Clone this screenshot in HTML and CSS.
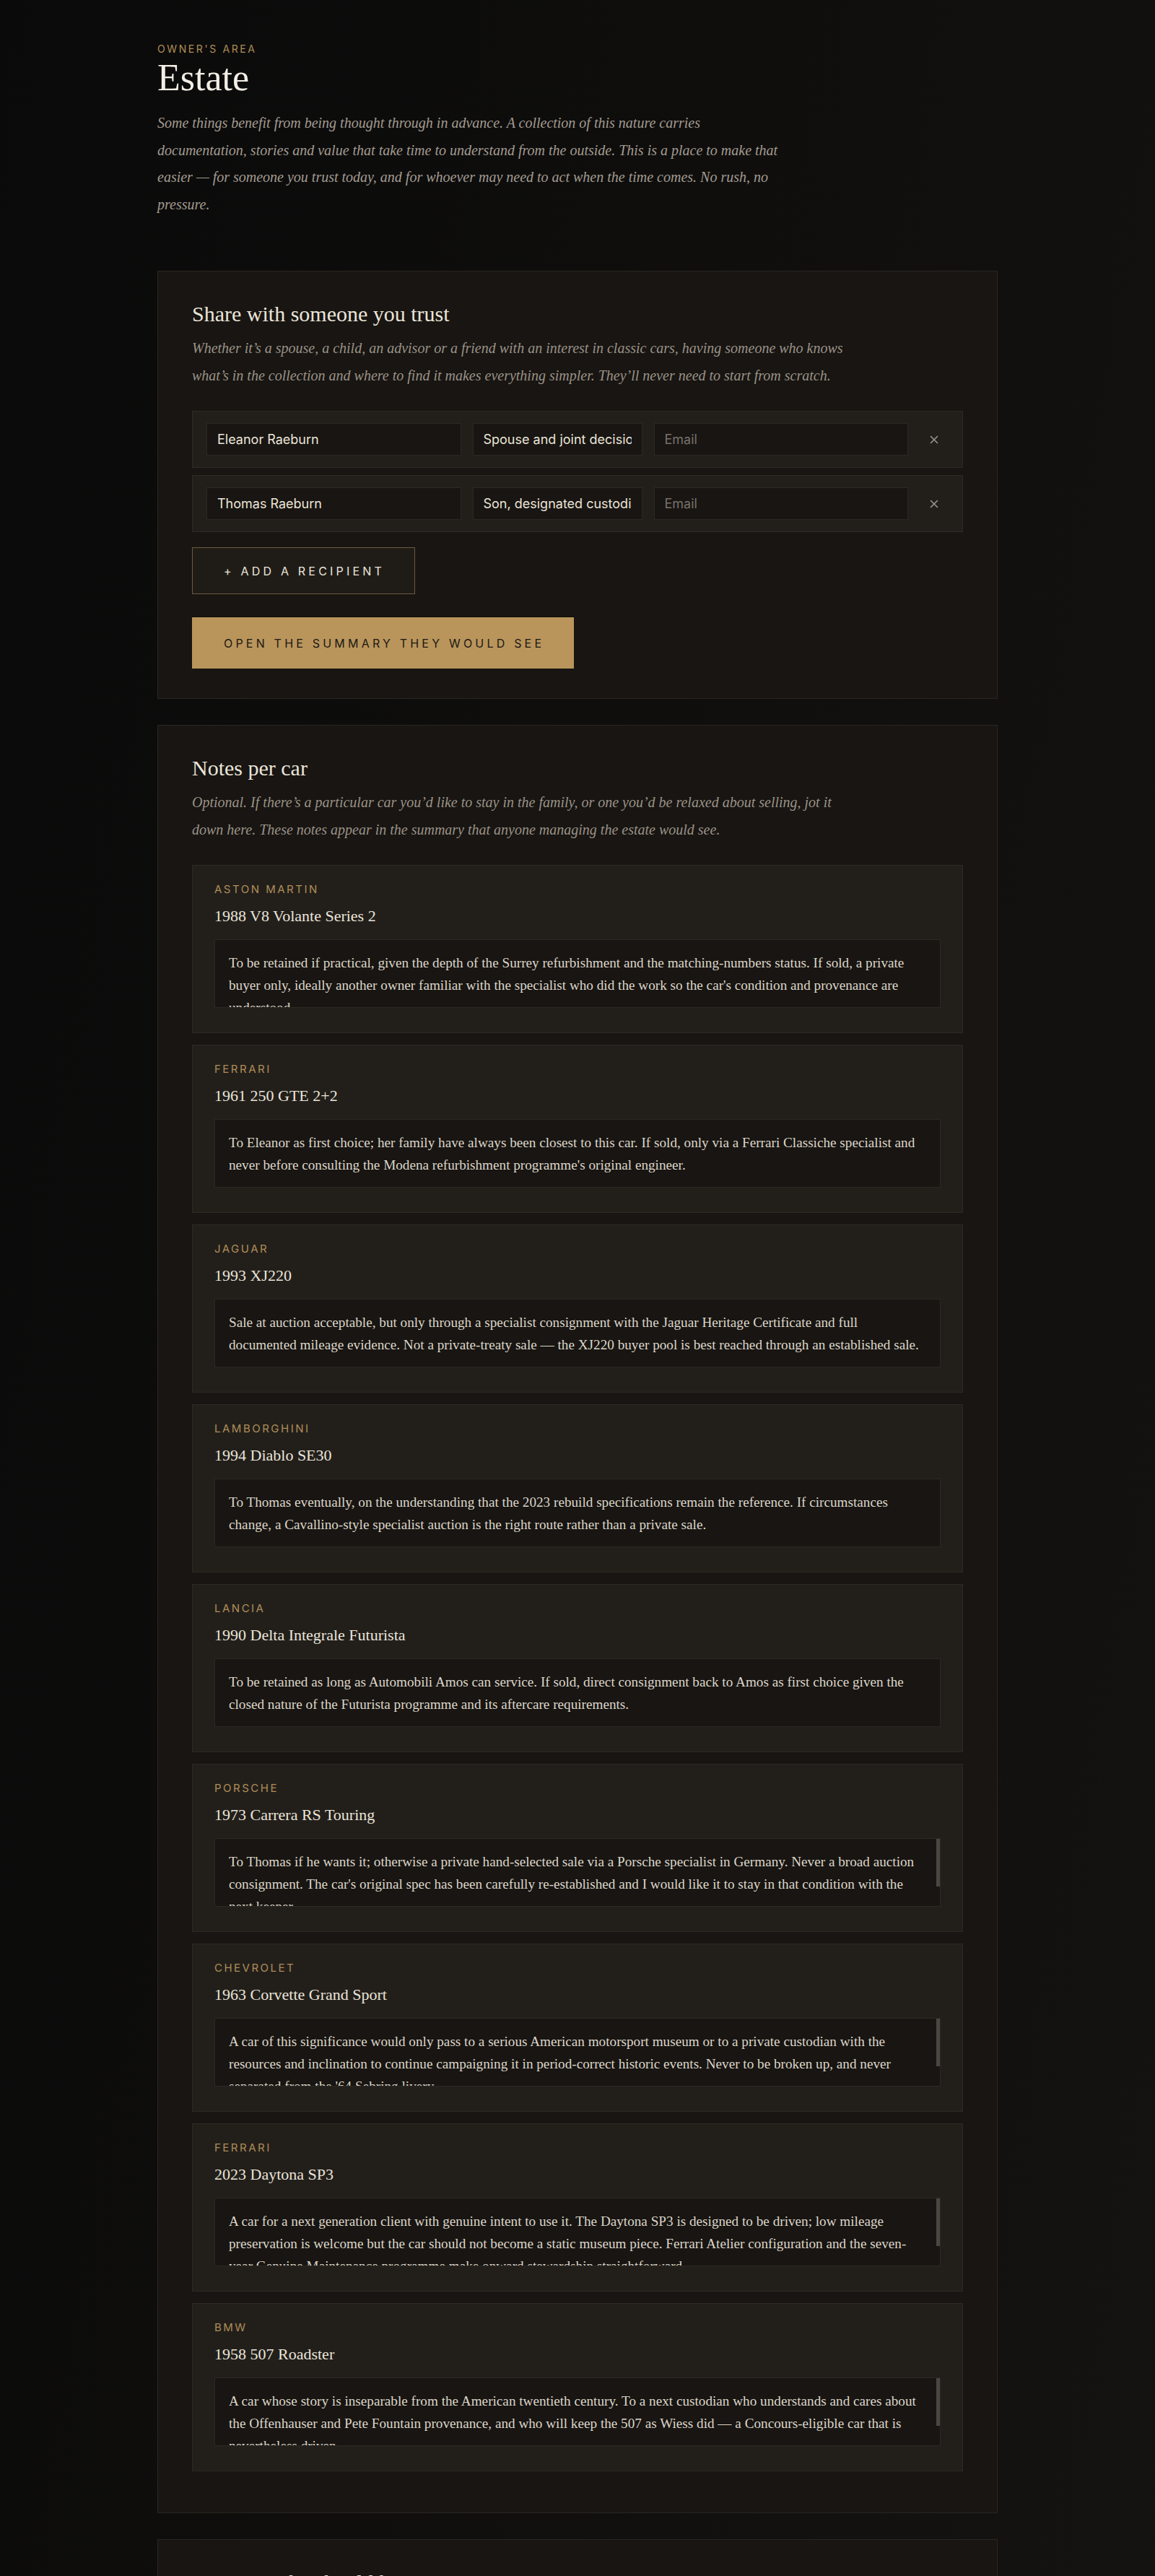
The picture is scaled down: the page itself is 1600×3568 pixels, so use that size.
FILE: index.html
```html
<!DOCTYPE html>
<html lang="en">
<head>
<meta charset="utf-8">
<title>Estate — Owner's area</title>
<link rel="stylesheet" href="styles.css">
</head>
<body>
<main class="page">
  <header class="intro">
    <p class="eyebrow">Owner's area</p>
    <h1 class="title">Estate</h1>
    <p class="lede">Some things benefit from being thought through in advance. A collection of this nature carries documentation, stories and value that take time to understand from the outside. This is a place to make that easier — for someone you trust today, and for whoever may need to act when the time comes. No rush, no pressure.</p>
  </header>

  <section class="panel">
    <h2 class="panel-title">Share with someone you trust</h2>
    <p class="panel-desc">Whether it’s a spouse, a child, an advisor or a friend with an interest in classic cars, having someone who knows what’s in the collection and where to find it makes everything simpler. They’ll never need to start from scratch.</p>

    <div class="recipients">
      <div class="recipient">
        <input class="field" type="text" value="Eleanor Raeburn" aria-label="Name" spellcheck="false">
        <input class="field" type="text" value="Spouse and joint decision-maker" aria-label="Relationship" spellcheck="false">
        <input class="field" type="email" placeholder="Email" aria-label="Email">
        <button class="remove" type="button" aria-label="Remove recipient">
          <svg width="12" height="12" viewBox="0 0 12 12"><path d="M1.5 1.5l9 9M10.5 1.5l-9 9" stroke="currentColor" stroke-width="1.6" stroke-linecap="round" fill="none"/></svg>
        </button>
      </div>
      <div class="recipient">
        <input class="field" type="text" value="Thomas Raeburn" aria-label="Name" spellcheck="false">
        <input class="field" type="text" value="Son, designated custodian" aria-label="Relationship" spellcheck="false">
        <input class="field" type="email" placeholder="Email" aria-label="Email">
        <button class="remove" type="button" aria-label="Remove recipient">
          <svg width="12" height="12" viewBox="0 0 12 12"><path d="M1.5 1.5l9 9M10.5 1.5l-9 9" stroke="currentColor" stroke-width="1.6" stroke-linecap="round" fill="none"/></svg>
        </button>
      </div>
    </div>

    <div class="actions">
      <button class="btn btn-outline" type="button">+ Add a recipient</button>
      <button class="btn btn-gold" type="button">Open the summary they would see</button>
    </div>
  </section>

  <section class="panel">
    <h2 class="panel-title">Notes per car</h2>
    <p class="panel-desc">Optional. If there’s a particular car you’d like to stay in the family, or one you’d be relaxed about selling, jot it down here. These notes appear in the summary that anyone managing the estate would see.</p>

    <div class="cars">
      <article class="car">
        <p class="car-make">Aston Martin</p>
        <h3 class="car-model">1988 V8 Volante Series 2</h3>
        <div class="note-wrap">
          <textarea class="note" aria-label="Note" spellcheck="false">To be retained if practical, given the depth of the Surrey refurbishment and the matching-numbers status. If sold, a private buyer only, ideally another owner familiar with the specialist who did the work so the car's condition and provenance are understood.</textarea>
        </div>
      </article>
      <article class="car">
        <p class="car-make">Ferrari</p>
        <h3 class="car-model">1961 250 GTE 2+2</h3>
        <div class="note-wrap">
          <textarea class="note" aria-label="Note" spellcheck="false">To Eleanor as first choice; her family have always been closest to this car. If sold, only via a Ferrari Classiche specialist and never before consulting the Modena refurbishment programme's original engineer.</textarea>
        </div>
      </article>
      <article class="car">
        <p class="car-make">Jaguar</p>
        <h3 class="car-model">1993 XJ220</h3>
        <div class="note-wrap">
          <textarea class="note" aria-label="Note" spellcheck="false">Sale at auction acceptable, but only through a specialist consignment with the Jaguar Heritage Certificate and full documented mileage evidence. Not a private-treaty sale — the XJ220 buyer pool is best reached through an established sale.</textarea>
        </div>
      </article>
      <article class="car">
        <p class="car-make">Lamborghini</p>
        <h3 class="car-model">1994 Diablo SE30</h3>
        <div class="note-wrap">
          <textarea class="note" aria-label="Note" spellcheck="false">To Thomas eventually, on the understanding that the 2023 rebuild specifications remain the reference. If circumstances change, a Cavallino-style specialist auction is the right route rather than a private sale.</textarea>
        </div>
      </article>
      <article class="car">
        <p class="car-make">Lancia</p>
        <h3 class="car-model">1990 Delta Integrale Futurista</h3>
        <div class="note-wrap">
          <textarea class="note" aria-label="Note" spellcheck="false">To be retained as long as Automobili Amos can service. If sold, direct consignment back to Amos as first choice given the closed nature of the Futurista programme and its aftercare requirements.</textarea>
        </div>
      </article>
      <article class="car">
        <p class="car-make">Porsche</p>
        <h3 class="car-model">1973 Carrera RS Touring</h3>
        <div class="note-wrap note-wrap--scroll">
          <textarea class="note" aria-label="Note" spellcheck="false">To Thomas if he wants it; otherwise a private hand-selected sale via a Porsche specialist in Germany. Never a broad auction consignment. The car's original spec has been carefully re-established and I would like it to stay in that condition with the next keeper.</textarea>
        </div>
      </article>
      <article class="car">
        <p class="car-make">Chevrolet</p>
        <h3 class="car-model">1963 Corvette Grand Sport</h3>
        <div class="note-wrap note-wrap--scroll">
          <textarea class="note" aria-label="Note" spellcheck="false">A car of this significance would only pass to a serious American motorsport museum or to a private custodian with the resources and inclination to continue campaigning it in period-correct historic events. Never to be broken up, and never separated from the '64 Sebring livery.</textarea>
        </div>
      </article>
      <article class="car">
        <p class="car-make">Ferrari</p>
        <h3 class="car-model">2023 Daytona SP3</h3>
        <div class="note-wrap note-wrap--scroll">
          <textarea class="note" aria-label="Note" spellcheck="false">A car for a next generation client with genuine intent to use it. The Daytona SP3 is designed to be driven; low mileage preservation is welcome but the car should not become a static museum piece. Ferrari Atelier configuration and the seven-year Genuine Maintenance programme make onward stewardship straightforward.</textarea>
        </div>
      </article>
      <article class="car">
        <p class="car-make">BMW</p>
        <h3 class="car-model">1958 507 Roadster</h3>
        <div class="note-wrap note-wrap--scroll">
          <textarea class="note" aria-label="Note" spellcheck="false">A car whose story is inseparable from the American twentieth century. To a next custodian who understands and cares about the Offenhauser and Pete Fountain provenance, and who will keep the 507 as Wiess did — a Concours-eligible car that is nevertheless driven.</textarea>
        </div>
      </article>
    </div>
  </section>

  <section class="panel">
    <h2 class="panel-title">Contacts who should know</h2>
    <p class="panel-desc">The specialists, storage facilities and advisors who already know these cars, so whoever follows can pick up the thread.</p>
  </section>
</main>
</body>
</html>
```

FILE: styles.css
```css
* {
  box-sizing: border-box;
}

html,
body {
  margin: 0;
}

body {
  background-color: #0d0c0c;
  background-image: linear-gradient(100deg, #0a0a0a 0%, #0f0e0d 45%, #141312 100%);
  color: #ece6dc;
  font-family: "Liberation Serif", "DejaVu Serif", serif;
  min-height: 100vh;
}

.page {
  max-width: 1164px;
  margin: 0 auto;
  padding: 60px 0 40px;
}

/* Intro */
.eyebrow {
  margin: 0;
  font-family: Inter, "Liberation Sans", sans-serif;
  font-size: 14px;
  line-height: 16px;
  letter-spacing: 2.6px;
  text-transform: uppercase;
  color: #b08d57;
}

.title {
  margin: 3px 0 0;
  font-size: 52px;
  line-height: 57px;
  font-weight: 400;
  color: #f3eee6;
}

.lede {
  margin: 16px 0 0;
  max-width: 876px;
  font-style: italic;
  font-size: 20px;
  line-height: 37.5px;
  color: #a39b90;
}

/* Panels */
.panel {
  margin-top: 73px;
  padding: 41px 47px;
  background: #181512;
  border: 1px solid #2a2622;
}

.panel + .panel {
  margin-top: 36px;
}

.panel-title {
  margin: 0;
  font-size: 30px;
  line-height: 36px;
  font-weight: 400;
  color: #ebe4d9;
}

.panel-desc {
  margin: 11px 0 0;
  max-width: 930px;
  font-style: italic;
  font-size: 20px;
  line-height: 37.5px;
  color: #9a9287;
}

/* Recipients */
.recipients {
  margin-top: 30px;
  display: flex;
  flex-direction: column;
  gap: 10px;
}

.recipient {
  display: grid;
  grid-template-columns: 1.5fr 1fr 1.5fr 40px;
  gap: 16px;
  align-items: center;
  padding: 16px 19px;
  background: #221f1b;
  border: 1px solid #2e2a25;
}

.field {
  width: 100%;
  min-width: 0;
  height: 45px;
  padding: 0 14px;
  font-family: Inter, "Liberation Sans", sans-serif;
  font-size: 18px;
  color: #ebe4d8;
  background: #181512;
  border: 1px solid #2c2823;
  border-radius: 0;
  outline: none;
}

.field::placeholder {
  color: #79726a;
}

.remove {
  display: flex;
  align-items: center;
  justify-content: center;
  width: 40px;
  height: 40px;
  padding: 0;
  background: none;
  border: 0;
  color: #9b948a;
  cursor: pointer;
}

/* Buttons */
.actions {
  display: flex;
  flex-direction: column;
  align-items: flex-start;
}

.btn {
  display: inline-flex;
  align-items: center;
  font-family: Inter, "Liberation Sans", sans-serif;
  font-size: 16px;
  line-height: 20px;
  letter-spacing: 4.2px;
  text-transform: uppercase;
  border-radius: 0;
  cursor: pointer;
}

.btn-outline {
  margin-top: 21px;
  height: 65px;
  padding: 0 41px 0 43px;
  color: #ece5d9;
  background: #1f1c18;
  border: 1px solid #6b5a3d;
}

.btn-gold {
  margin-top: 31px;
  height: 72px;
  padding: 0 41px 0 44px;
  color: #1c1814;
  background: #b9955b;
  border: 0;
  border-top: 1px solid #0f0d0b;
}

/* Cars */
.cars {
  margin-top: 30px;
}

.car {
  margin-bottom: 16px;
  padding: 25px 30px 34px;
  background: #221f1b;
  border: 1px solid #2d2924;
}

.car-make {
  margin: 0;
  font-family: Inter, "Liberation Sans", sans-serif;
  font-size: 15px;
  line-height: 16px;
  letter-spacing: 2.5px;
  text-transform: uppercase;
  color: #b08d57;
}

.car-model {
  margin: 14px 0 0;
  font-size: 22px;
  line-height: 29px;
  font-weight: 400;
  color: #ebe4d9;
}

.note-wrap {
  position: relative;
  margin-top: 18px;
}

.note {
  display: block;
  width: 100%;
  height: 95px;
  padding: 16px 19px 15px;
  font-family: "Liberation Serif", "DejaVu Serif", serif;
  font-size: 19.2px;
  line-height: 31px;
  color: #ddd5c9;
  background: #181512;
  border: 1px solid #2c2823;
  border-radius: 0;
  outline: none;
  resize: none;
  scrollbar-width: none;
}

.note-wrap--scroll .note {
  padding-right: 24px;
}

.note-wrap--scroll::after {
  content: "";
  position: absolute;
  top: 1px;
  right: 1px;
  width: 5px;
  height: 66px;
  background: #4a4642;
  pointer-events: none;
}
```
